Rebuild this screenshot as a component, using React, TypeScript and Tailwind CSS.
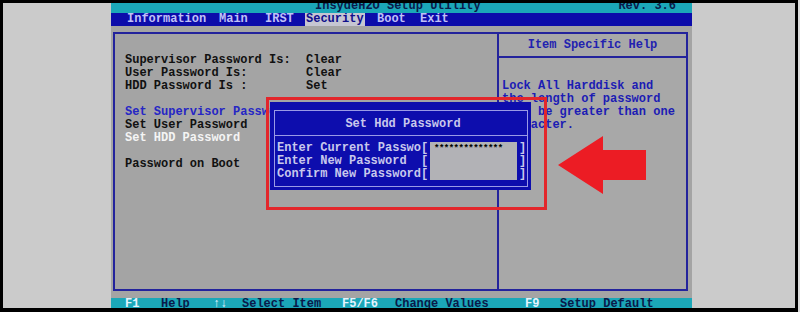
import React from 'react';

const mono = { fontFamily: '"Liberation Mono", "DejaVu Sans Mono", monospace' };

const App = () => {
  return (
    <div className="relative w-[800px] h-[312px] bg-[#dcdcdc] overflow-hidden" style={mono}>
      {/* Monitor frame */}
      <div className="w-[798px] h-[312px] border-t-[3px] border-l-[3px] border-r-[3px] border-b-[4px] border-black bg-[#cbcbcb] flex pl-[108px]">
        {/* BIOS screen */}
        <div className="w-[581px] h-full flex flex-col text-[12px] font-bold">
          {/* Title bar */}
          <div className="h-[10px] bg-[#1ba7b8] overflow-hidden flex text-[#0a1a4a] pr-[16px]">
            <div className="pl-[204px] leading-[12px] -mt-[3px] whitespace-pre">InsydeH2O Setup Utility</div>
            <div className="ml-auto leading-[12px] -mt-[3px] whitespace-pre">Rev. 3.6</div>
          </div>

          {/* Menu bar */}
          <div className="h-[13px] bg-[#0c0caa] flex items-stretch pl-[16px] text-[#c0c0f8] leading-[13px]">
            <span className="w-[79px]">Information</span>
            <span className="ml-[13px] w-[29px]">Main</span>
            <span className="ml-[17px] w-[29px]">IRST</span>
            <span className="ml-[11px] w-[60px] pl-[1px] bg-[#c6c6d2] text-[#10108c]">Security</span>
            <span className="ml-[12px] w-[29px]">Boot</span>
            <span className="ml-[14px] w-[29px]">Exit</span>
          </div>

          {/* Body */}
          <div className="flex-1 bg-[#a4a4a4] pt-[6px] pl-[2px] pr-[4px] pb-[7px] flex">
            <div className="flex-1 border-2 border-[#23239c] flex">
              {/* Left pane */}
              <div className="w-[384px] border-r-2 border-[#23239c] pl-[10px] pt-[20px] leading-[13px] text-[#111]">
                <div className="flex"><span className="w-[181px]">Supervisor Password Is:</span><span>Clear</span></div>
                <div className="flex"><span className="w-[181px]">User Password Is:</span><span>Clear</span></div>
                <div className="flex"><span className="w-[181px] whitespace-pre">HDD Password Is :</span><span>Set</span></div>
                <div className="h-[13px]" />
                <div className="text-[#2626c4]">Set Supervisor Password</div>
                <div>Set User Password</div>
                <div className="text-[#f4f4f4]">Set HDD Password</div>
                <div className="h-[13px]" />
                <div>Password on Boot</div>
              </div>

              {/* Right pane */}
              <div className="flex-1 flex flex-col bg-[#a8a8a8]">
                <div className="h-[24px] border-b-2 border-[#23239c] flex items-center justify-center text-[#2222b0]">
                  Item Specific Help
                </div>
                <div className="pl-[3px] pt-[22px] leading-[13px] text-[#1c1cb4] whitespace-pre">
                  <div>Lock All Harddisk and</div>
                  <div>the length of password</div>
                  <div>must be greater than one</div>
                  <div>character.</div>
                </div>
              </div>
            </div>
          </div>

          {/* Bottom key bar */}
          <div className="h-[10px] bg-[#1ba7b8] overflow-hidden flex pl-[14px] leading-[12px]">
            <span className="w-[36px] text-[#e6f4ff]">F1</span>
            <span className="w-[52px] text-[#0a1a4a]">Help</span>
            <span className="w-[29px] text-[#e6f4ff]">↑↓</span>
            <span className="w-[100px] text-[#0a1a4a]">Select Item</span>
            <span className="w-[53px] text-[#e6f4ff]">F5/F6</span>
            <span className="w-[130px] text-[#0a1a4a]">Change Values</span>
            <span className="w-[35px] text-[#e6f4ff]">F9</span>
            <span className="text-[#0a1a4a]">Setup Default</span>
          </div>
        </div>
      </div>

      {/* Dialog */}
      <div className="absolute left-[270px] top-[102px] w-[261px] h-[88px] bg-[#0d0dad] pt-[8px] pl-[4px] pr-[3px] pb-[3px] text-[12px] font-bold text-[#c8c8ec]">
        <div className="h-full border border-[#9a9ae6] flex flex-col">
          <div className="h-[25px] border-b border-[#9a9ae6] flex items-center justify-center pl-[4px] pt-[1px]">
            Set Hdd Password
          </div>
          <div className="flex pt-[6px] pl-[2px] leading-[13px]">
            <div className="w-[153px] whitespace-pre">
              <div>Enter Current Passwo[</div>
              <div>Enter New Password  [</div>
              <div>Confirm New Password[</div>
            </div>
            <div className="w-[87px] h-[38px] bg-[#b2b2b6] flex justify-start pl-[4px] pt-[3px]">
              <span className="text-[9px] leading-[8px] text-black tracking-[-0.5px]">**************</span>
            </div>
            <div className="pl-[2px]">
              <div>]</div>
              <div>]</div>
              <div>]</div>
            </div>
          </div>
        </div>
      </div>

      {/* Red highlight frame */}
      <div className="absolute left-[266px] top-[97px] w-[281px] h-[113px] border-[3px] border-[#e3262b]" />

      {/* Red arrow */}
      <svg className="absolute left-[558px] top-[136px]" width="88" height="58" viewBox="0 0 88 58">
        <polygon points="0,29 45,0 45,14 88,14 88,44 45,44 45,58" fill="#ec1c24" />
      </svg>
    </div>
  );
};

export default App;
